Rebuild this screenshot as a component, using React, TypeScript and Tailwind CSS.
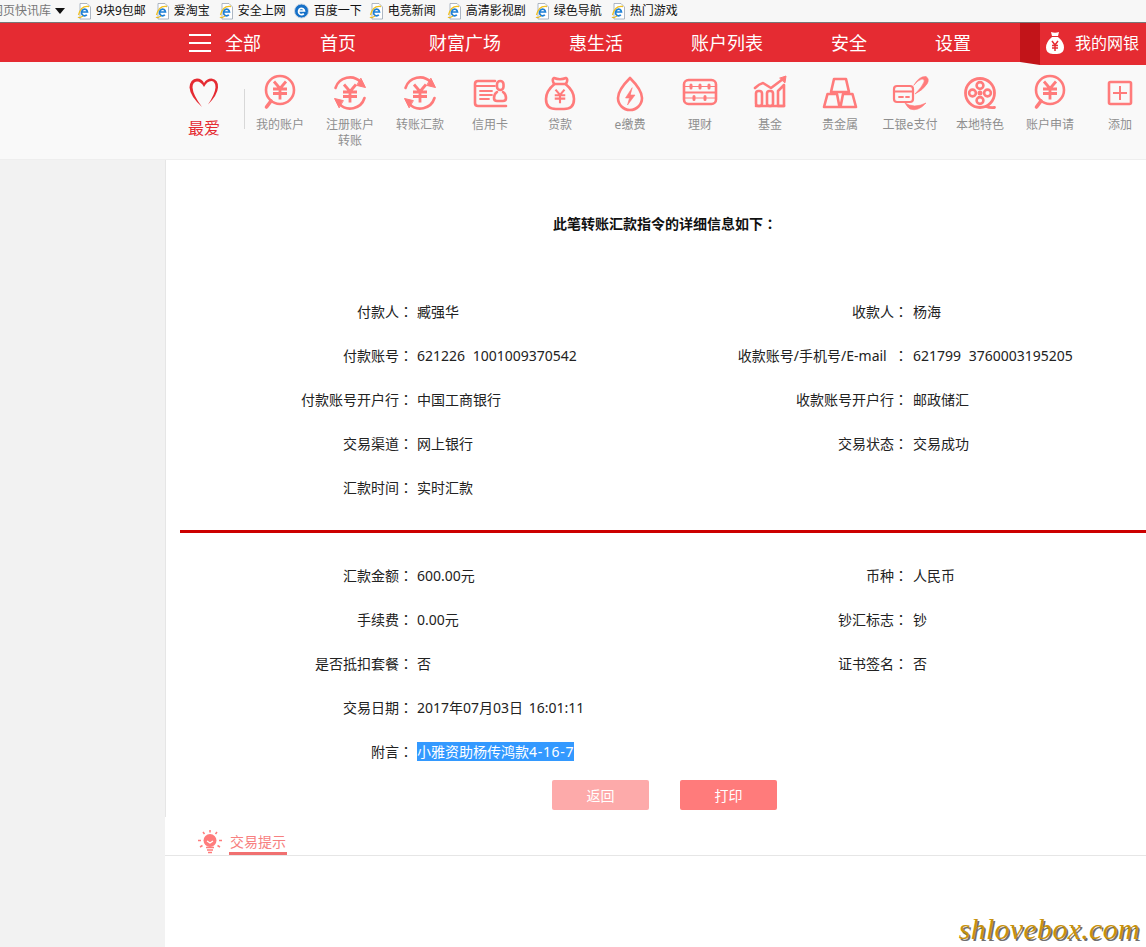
import React from "react";

const Yen = ({ cx, cy, s = 1 }: { cx: number; cy: number; s?: number }) => (
  <g transform={`translate(${cx} ${cy}) scale(${s})`} fill="none" stroke="#ff7b7b" strokeWidth={2.8} strokeLinecap="butt" strokeLinejoin="miter">
    <path d="M-6 -8.5 L0 -1.5 L6 -8.5 M-7 -1 H7 M-7 3.5 H7 M0 -1 V9.5" />
  </g>
);

const S = { fill: "none", stroke: "#ff7b7b", strokeWidth: 2.6, strokeLinejoin: "round" as const, strokeLinecap: "round" as const };

const icons: Record<string, React.ReactNode> = {
  account: (
    <g {...S}>
      <circle cx="20" cy="17" r="14" />
      <path d="M11 28 L6.5 34" strokeWidth={3.6} />
      <Yen cx={20} cy={17} />
    </g>
  ),
  register: (
    <g {...S}>
      <path d="M5.5 15 A15 15 0 0 1 31 9.5" />
      <path d="M34.5 25 A15 15 0 0 1 9 30.5" />
      <path d="M31 5.5 L35.5 14.5 L27 12.5 Z" fill="#ff7b7b" strokeWidth={1} />
      <path d="M9 34.5 L4.5 25.5 L13 27.5 Z" fill="#ff7b7b" strokeWidth={1} />
      <Yen cx={20} cy={20} />
    </g>
  ),
  card: (
    <g {...S}>
      <path d="M25 8 H8 Q5 8 5 11 V30 Q5 33 8 33 H36" />
      <path d="M5 13 H25 M10 18 H22 M10 22 H22 M10 26 H19" strokeWidth={1.8} />
      <rect x="27" y="8" width="6.5" height="9" rx="3.2" />
      <path d="M27 19 Q24 21 24 25 Q24 28 27 28 H33 Q36 28 36 25 Q36 21 33 19" />
    </g>
  ),
  bag: (
    <g {...S}>
      <path d="M14 5 Q20 7.5 26 5 Q28.5 6 26 11 H14 Q11.5 6 14 5 Z" />
      <path d="M14.5 11 Q6 18 6 26 Q6 36 16 36 H24 Q34 36 34 26 Q34 18 25.5 11" />
      <Yen cx={20} cy={23} s={0.75} />
    </g>
  ),
  drop: (
    <g {...S}>
      <path d="M20 5 Q8 17 8 25 A12 12 0 0 0 32 25 Q32 17 20 5 Z" />
      <path d="M22 15 L15.5 25 H19.5 L17.5 32 L25 22 H20.5 Z" fill="#ff7b7b" strokeWidth={0.6} />
    </g>
  ),
  abacus: (
    <g {...S}>
      <rect x="4" y="7" width="32" height="24" rx="4.5" />
      <path d="M4 19.5 H36" strokeWidth={2} />
      <path d="M4 13.5 H36 M4 25 H36" strokeWidth={1} />
      <path d="M11 12 V15 M20 12 V15 M29 12 V15 M14 23.5 V26.5 M25 23.5 V26.5" strokeWidth={3} />
    </g>
  ),
  fund: (
    <g {...S}>
      <path d="M5 15 Q9 11 13 10 L21 15 L33 6" />
      <path d="M30 5 L36 3 L35 9.5 Z" fill="#ff7b7b" strokeWidth={1} />
      <rect x="6" y="18" width="6" height="15" rx="2.5" />
      <rect x="17" y="18" width="6" height="15" rx="2.5" />
      <path d="M28 33 V18 L34 12 V33 Z" />
      <path d="M6 33 H34" />
    </g>
  ),
  gold: (
    <g {...S}>
      <path d="M14 6 H26 L29 19 H11 Z" />
      <path d="M7.5 21 H17 L19.5 34 H4 Z" />
      <path d="M23 21 H32.5 L36 34 H20.5 Z" />
    </g>
  ),
  epay: (
    <g {...S}>
      <rect x="4" y="13" width="19" height="16" rx="3" strokeWidth={2.2} />
      <path d="M4 18.5 H23" strokeWidth={2} />
      <path d="M9 24 H13 M16 24 H19" strokeWidth={1.8} />
      <path d="M24 12 Q29 3 36 3.5 Q40 6 37 11 Q33 17 25 21 Q32 14 34 9 Q35 6 32 6 Q28 7 24 12 Z" fill="#ff7b7b" strokeWidth={0.6} />
      <path d="M15 30 Q24 36 36 30 Q28 39 20 36 Q17 34 15 30 Z" fill="#ff7b7b" strokeWidth={0.6} />
    </g>
  ),
  reel: (
    <g {...S}>
      <circle cx="20" cy="20" r="14.5" strokeWidth={2.8} />
      <circle cx="20" cy="12.5" r="3.4" />
      <circle cx="20" cy="27.5" r="3.4" />
      <circle cx="12.5" cy="20" r="3.4" />
      <circle cx="27.5" cy="20" r="3.4" />
      <circle cx="20" cy="20" r="1.2" fill="#ff7b7b" />
      <path d="M26 33.5 Q30 35 34.5 34.5" strokeWidth={2.8} />
    </g>
  ),
  plus: (
    <g {...S}>
      <rect x="9" y="9" width="22" height="22" rx="1.5" />
      <path d="M13 20 H27 M20 13 V27" strokeWidth={2} strokeLinecap="butt" />
    </g>
  ),
};

const items: [string, string][] = [
  ["account", "我的账户"],
  ["register", "注册账户转账"],
  ["register", "转账汇款"],
  ["card", "信用卡"],
  ["bag", "贷款"],
  ["drop", "e缴费"],
  ["abacus", "理财"],
  ["fund", "基金"],
  ["gold", "贵金属"],
  ["epay", "工银e支付"],
  ["reel", "本地特色"],
  ["account", "账户申请"],
  ["plus", "添加"],
];

const Ie = ({ round = false }: { round?: boolean }) =>
  round ? (
    <svg width="15" height="16" viewBox="0 0 15 16" className="shrink-0">
      <circle cx="7.5" cy="8" r="7" fill="#1570c8" stroke="#c7d4e2" />
      <path d="M4.5 8 H10.5 A3 3.2 0 1 0 9.8 10.6" fill="none" stroke="#fff" strokeWidth="1.7" />
    </svg>
  ) : (
    <svg width="14" height="17" viewBox="0 0 14 17" className="shrink-0">
      <path d="M3 .5 H10 L13.5 4 V16 H3 Z" fill="#fff" stroke="#9aa6b5" strokeWidth="0.8" />
      <path d="M1.5 12 Q4 2 12 3.5" fill="none" stroke="#f0c020" strokeWidth="1.3" />
      <path d="M4.5 9 H10.5 A3 3.4 0 1 0 9.8 11.8" fill="none" stroke="#1d7fd6" strokeWidth="1.7" />
      <path d="M1 14 Q2 15.5 6 13" fill="none" stroke="#e8b818" strokeWidth="1.2" />
    </svg>
  );

const links: [string, number, boolean?][] = [
  ["9块9包邮", 9],
  ["爱淘宝", 9],
  ["安全上网", 8],
  ["百度一下", 7, true],
  ["电竞新闻", 11],
  ["高清影视剧", 9],
  ["绿色导航", 9],
  ["热门游戏", 0],
];

const Colon = () => <span className="font-['Noto_Sans_CJK_TC',sans-serif] leading-[0]">：</span>;

const Row = ({ a, b, c, d, sel }: { a: string; b: React.ReactNode; c?: string; d?: string; sel?: boolean }) => (
  <div className="grid h-11 grid-cols-[233px_250px_245px_1fr] items-center text-[14px] leading-[20px] text-[#222] [word-spacing:4px]">
    <div className="whitespace-nowrap text-right [word-spacing:0]">
      {a}
      <Colon />
    </div>
    <div className="whitespace-nowrap pl-[4px]">
      {sel ? <span className="bg-[#3399ff] text-white">{b}</span> : b}
    </div>
    <div className="whitespace-nowrap text-right [word-spacing:0]">
      {c}
      {c ? <Colon /> : null}
    </div>
    <div className="whitespace-nowrap pl-[5px]">{d}</div>
  </div>
);

export default function App() {
  return (
    <div className="relative h-[947px] w-[1146px] overflow-hidden bg-white font-['Noto_Sans','Noto_Sans_CJK_SC',sans-serif]">
      {/* browser favourites bar */}
      <div className="flex h-[23px] items-center overflow-hidden border-b border-[#777] bg-[#f7f7f7] text-[12px] leading-none text-[#111]">
        <span className="ml-[-9px] whitespace-nowrap text-[#777]">网页快讯库</span>
        <svg width="10" height="6" viewBox="0 0 10 6" className="ml-[4px] mr-[12px] shrink-0">
          <path d="M0 0 H10 L5 6 Z" fill="#111" />
        </svg>
        {links.map(([t, m, r]) => (
          <div key={t} className="flex shrink-0 items-center gap-[5px]" style={{ marginRight: m }}>
            <Ie round={r} />
            <span className="whitespace-nowrap">{t}</span>
          </div>
        ))}
      </div>

      {/* red main nav */}
      <div className="relative flex h-[39px] items-center bg-[#e52b32] pl-[189px] text-[18px] leading-none text-white">
        <div className="mr-[14px] flex w-[22px] flex-col gap-[6px]">
          <i className="block h-[2px] bg-white" />
          <i className="block h-[2px] bg-white" />
          <i className="block h-[2px] bg-white" />
        </div>
        <span className="mr-[59px] whitespace-nowrap">全部</span>
        <span className="mr-[73px] whitespace-nowrap">首页</span>
        <span className="mr-[68px] whitespace-nowrap">财富广场</span>
        <span className="mr-[68px] whitespace-nowrap">惠生活</span>
        <span className="mr-[68px] whitespace-nowrap">账户列表</span>
        <span className="mr-[68px] whitespace-nowrap">安全</span>
        <span className="whitespace-nowrap">设置</span>
        <div className="absolute left-[1020px] top-0 flex h-[42px] w-[126px]">
          <svg width="20" height="42" viewBox="0 0 20 42" className="shrink-0">
            <path d="M0 0 H20 V42 L0 39 Z" fill="#c21419" />
          </svg>
          <div className="flex flex-1 items-center gap-[11px] bg-[#e52b32] pb-[3px] pl-[6px] text-[16px]">
            <svg width="18" height="24" viewBox="0 0 18 24" className="shrink-0">
              <path d="M5 1 Q9 2.5 13 1 L12 5 H6 Z M6 6 H12 Q18 11 18 16.5 Q18 23 11 23 H7 Q0 23 0 16.5 Q0 11 6 6 Z" fill="#fff" />
              <path d="M6 10 L9 14 L12 10 M6 14.5 H12 M6 17 H12 M9 14 V20" fill="none" stroke="#e52b32" strokeWidth="1.5" />
            </svg>
            <span className="whitespace-nowrap">我的网银</span>
          </div>
        </div>
      </div>

      {/* icon strip */}
      <div className="flex h-[98px] border-b border-[#eeeeee] bg-[#f9f9f9] pl-[184px]">
        <div className="flex w-[40px] shrink-0 flex-col items-center pt-[15px] text-[16px] leading-[20px] text-[#e52b32]">
          <svg width="32" height="32" viewBox="0 0 32 32" className="shrink-0">
            <path
              d="M14 30 Q2 19 1.5 10.5 Q2 2 9 1.5 Q14 1.5 16 6 Q18.5 1.5 23.5 1.5 Q30.5 2.5 30 10.5 Q29.5 18 20 27.5 Q27 17 27.5 10.5 Q27.5 4.5 23.5 4 Q19 4 16 10 Q13 4.5 9 4.5 Q4.5 5 4.5 10.5 Q5 18 14 30 Z"
              fill="#e52b32"
            />
          </svg>
          <span className="mt-[9px] whitespace-nowrap">最爱</span>
        </div>
        <div className="ml-[20px] mt-[27px] h-[40px] w-px shrink-0 bg-[#d8d8d8]" />
        <div className="flex">
          {items.map(([ic, t], i) => (
            <div key={i} className="flex w-[70px] shrink-0 flex-col items-center pt-[11px] text-center text-[12px] leading-[16px] text-[#8f8f8f]">
              <svg width="40" height="40" viewBox="0 0 40 40" className="shrink-0">
                {icons[ic]}
              </svg>
              <span className="mt-[4px] w-[56px]">{t}</span>
            </div>
          ))}
        </div>
      </div>

      {/* body */}
      <div className="flex h-[787px]">
        <div className="w-[165px] shrink-0 bg-[#f2f2f2]" />
        <div className="flex min-w-0 flex-1 flex-col">
          <div className="h-[657px] border-l border-[#e6e6e6] pl-[14px]">
            <div className="h-[74px] pl-[4px] pt-[54px] text-center text-[14px] font-bold leading-[20px] text-[#111]">
              此笔转账汇款指令的详细信息如下
              <Colon />
            </div>
            <div className="pt-[56px]">
              <Row a="付款人" b="臧强华" c="收款人" d="杨海" />
              <Row a="付款账号" b="621226 1001009370542" c={"收款账号/手机号/E-mail\u00a0\u00a0"} d="621799 3760003195205" />
              <Row a="付款账号开户行" b="中国工商银行" c="收款账号开户行" d="邮政储汇" />
              <Row a="交易渠道" b="网上银行" c="交易状态" d="交易成功" />
              <Row a="汇款时间" b="实时汇款" />
            </div>
            <div className="mb-[21px] mt-[20px] h-[3px] bg-[#cc0000]" />
            <Row a="汇款金额" b="600.00元" c="币种" d="人民币" />
            <Row a="手续费" b="0.00元" c="钞汇标志" d="钞" />
            <Row a="是否抵扣套餐" b="否" c="证书签名" d="否" />
            <Row a="交易日期" b={<span className="[word-spacing:2px]">2017年07月03日 16:01:11</span>} />
            <Row a="附言" b={<>小雅资助杨传鸿款<span className="tracking-[0.7px]">4-16-7</span></>} sel />
            <div className="mt-[6px] flex gap-[31px] pl-[372px] text-[14px] text-white">
              <button className="h-[30px] w-[97px] rounded-[2px] bg-[#fdaaaa]">返回</button>
              <button className="h-[30px] w-[97px] rounded-[2px] bg-[#ff7b7b]">打印</button>
            </div>
          </div>
          <div className="flex h-[39px] items-end border-b border-[#e6e6e6] pl-[33px]">
            <svg width="24" height="24" viewBox="0 0 24 24" className="mb-[1px] mr-[7px] shrink-0">
              <circle cx="12" cy="10.5" r="6.5" fill="#ff7b7b" />
              <path d="M9 11 L12 13 L15 11" fill="none" stroke="#fff" strokeWidth="1.2" />
              <path d="M8 17.5 H16 M9 20 H15 M10 22.5 H14" stroke="#ff7b7b" strokeWidth="1.7" />
              <path d="M12 0 V2.5 M5 2 L6.5 4 M19 2 L17.5 4 M0 10.5 H3 M21 10.5 H24 M2 17 L4.5 15.5 M22 17 L19.5 15.5" stroke="#ff7b7b" strokeWidth="1.5" />
            </svg>
            <div className="w-[58px] whitespace-nowrap border-b-[3px] border-[#f07070] text-center text-[14px] leading-[21px] text-[#f78080]">交易提示</div>
          </div>
        </div>
      </div>

      {/* watermark */}
      <div className="absolute bottom-[0px] right-[6px] text-[30px] font-normal italic leading-[36px] tracking-[0.3px] text-[#c8920c] [text-shadow:1.5px_1.5px_0_#6e6e6e] font-['Liberation_Serif',serif]">
        shlovebox.com
      </div>
    </div>
  );
}
